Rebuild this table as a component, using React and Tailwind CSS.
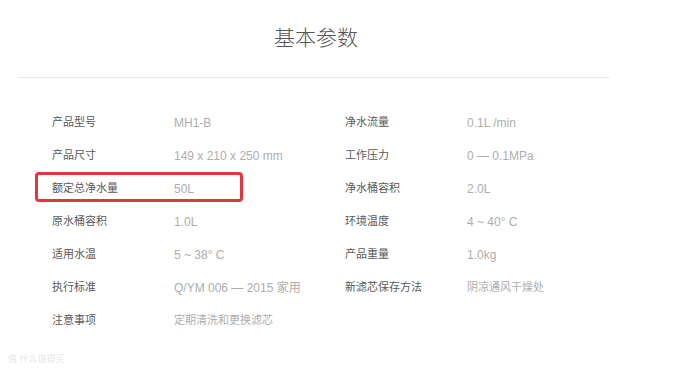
const left = [
  ["产品型号", "MH1-B"],
  ["产品尺寸", "149 x 210 x 250 mm"],
  ["额定总净水量", "50L", true],
  ["原水桶容积", "1.0L"],
  ["适用水温", "5 ~ 38°  C"],
  ["执行标准", "Q/YM 006 — 2015 家用"],
  ["注意事项", "定期清洗和更换滤芯", false, true],
];

const right = [
  ["净水流量", "0.1L /min"],
  ["工作压力", "0 — 0.1MPa"],
  ["净水桶容积", "2.0L"],
  ["环境温度", "4 ~ 40°  C"],
  ["产品重量", "1.0kg"],
  ["新滤芯保存方法", "阴凉通风干燥处", false, true],
];

function Row({ label, value, mark, cjk }) {
  return (
    <div className="relative flex items-center h-[33px]">
      {mark && (
        <div className="absolute left-[-17px] top-0 w-[208px] h-[30px] border-[3px] border-[#e2373c] rounded-[4px]" />
      )}
      <span className="w-[122px] text-[11px] text-[#5a5a5a]">{label}</span>
      <span className={`${cjk ? "text-[11px]" : "text-[12px]"} text-[#adadad]`}>{value}</span>
    </div>
  );
}

export default function App() {
  return (
    <div
      className="w-[692px] h-[378px] bg-white relative overflow-hidden text-[12px]"
      style={{ fontFamily: '"Liberation Sans", "Noto Sans CJK SC", sans-serif' }}
    >
      <div className="w-[592px] ml-[18px] pt-[22px]">
        <h1 className="text-center text-[21px] leading-[32px] text-[#555] font-light pl-[4px]">基本参数</h1>
        <div className="mt-[23px] border-t border-[#e6e6e6]" />
        <div className="grid grid-cols-[293px_1fr] pl-[34px] pt-[28px]">
          <div>
            {left.map(([l, v, m, c]) => (
              <Row key={l} label={l} value={v} mark={m} cjk={c} />
            ))}
          </div>
          <div>
            {right.map(([l, v, m, c]) => (
              <Row key={l} label={l} value={v} mark={m} cjk={c} />
            ))}
          </div>
        </div>
      </div>
      <div className="absolute left-[8px] bottom-[12px] text-[9px] text-[#e4e4e4] blur-[0.6px]">值 什么值得买</div>
    </div>
  );
}
